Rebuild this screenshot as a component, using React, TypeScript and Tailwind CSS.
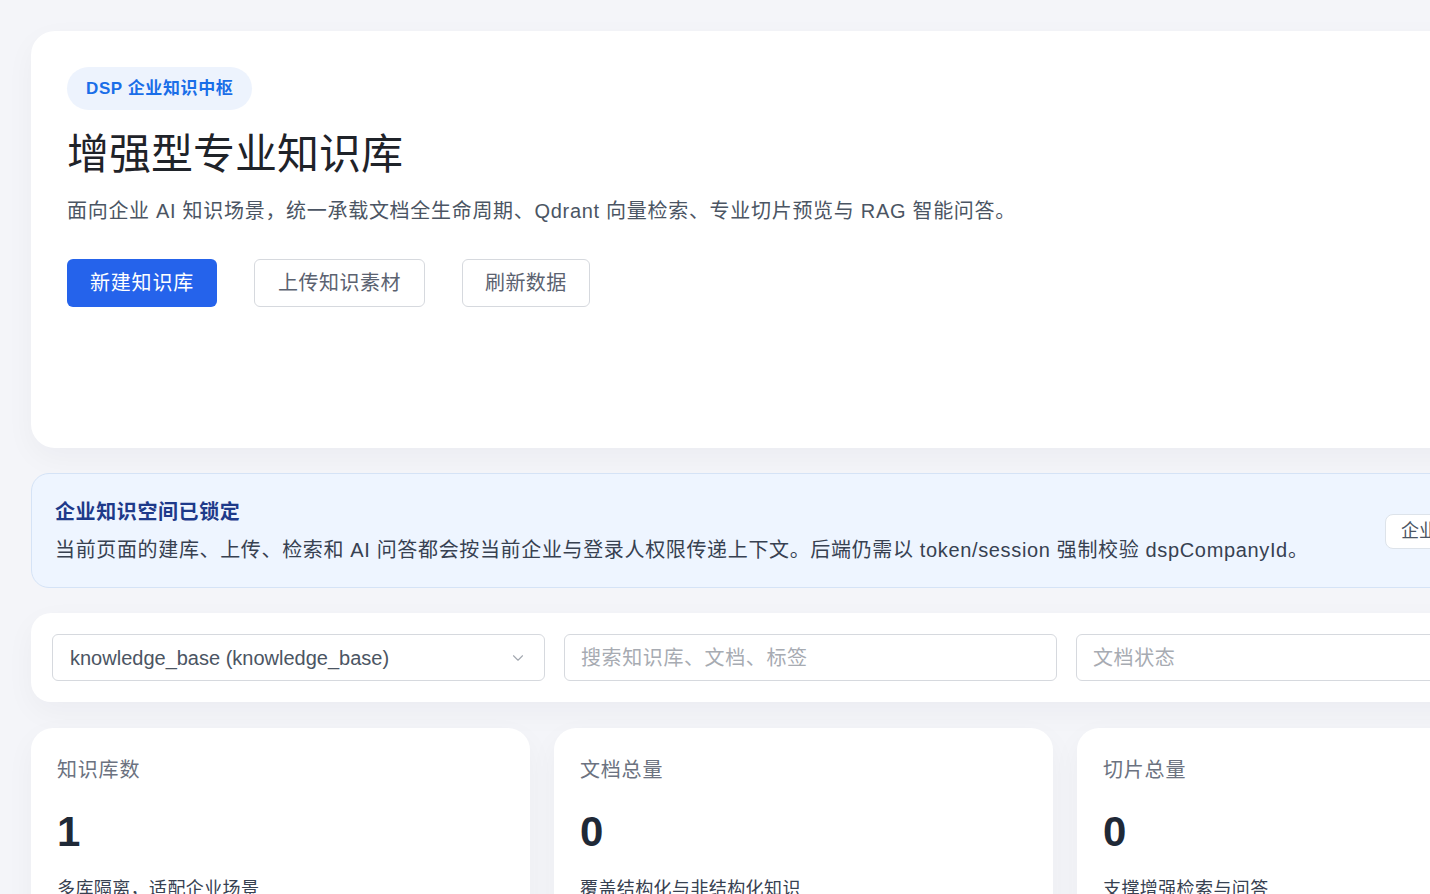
import { ChevronDown } from "lucide-react";

const FONT = { fontFamily: '"Liberation Sans", "Noto Sans CJK SC", Arial, sans-serif' };

const STATS = [
  { label: "知识库数", value: "1", hint: "多库隔离，适配企业场景" },
  { label: "文档总量", value: "0", hint: "覆盖结构化与非结构化知识" },
  { label: "切片总量", value: "0", hint: "支撑增强检索与问答" },
];

function HeroCard() {
  return (
    <section className="h-[417px] rounded-[24px] bg-white p-[36px] shadow-[0_10px_30px_rgba(15,23,42,0.04)]">
      <span className="inline-flex h-[43px] items-center rounded-full bg-[#edf3fd] px-[19px] text-[17px] font-bold tracking-[0.6px] text-[#1a6ee8]">
        DSP 企业知识中枢
      </span>
      <h1 className="mt-[19px] text-[42px] font-normal leading-[52px] text-[#1f2329]">增强型专业知识库</h1>
      <p className="mt-[16px] text-[20px] leading-[28px] tracking-[0.7px] text-[#4b5563]">
        面向企业 AI 知识场景，统一承载文档全生命周期、Qdrant 向量检索、专业切片预览与 RAG 智能问答。
      </p>
      <div className="mt-[34px] flex gap-[37px]">
        <button
          type="button"
          className="h-[48px] rounded-[6px] bg-[#2563eb] px-[23px] text-[20px] tracking-[0.8px] text-white"
        >
          新建知识库
        </button>
        <button
          type="button"
          className="h-[48px] rounded-[6px] border border-[#d6d9de] bg-white px-[23px] text-[20px] tracking-[0.5px] text-[#5b6270]"
        >
          上传知识素材
        </button>
        <button
          type="button"
          className="h-[48px] rounded-[6px] border border-[#d6d9de] bg-white px-[22px] text-[20px] tracking-[0.4px] text-[#5b6270]"
        >
          刷新数据
        </button>
      </div>
    </section>
  );
}

function ScopeNotice() {
  return (
    <section className="flex items-center justify-between rounded-[18px] border border-[#d5e3f6] bg-[#eef5ff] px-[23px] pb-[23px] pt-[24px]">
      <div>
        <p className="text-[20px] font-bold leading-[28px] tracking-[0.6px] text-[#1e3a8a]">企业知识空间已锁定</p>
        <p className="mt-[10px] text-[20px] leading-[28px] tracking-[0.65px] text-[#374151]">
          当前页面的建库、上传、检索和 AI 问答都会按当前企业与登录人权限传递上下文。后端仍需以 token/session 强制校验 dspCompanyId。
        </p>
      </div>
      <span className="flex h-[35px] w-[167px] items-center rounded-[8px] border border-[#dde3ea] bg-white px-[15px] text-[18px] text-[#4b5563]">
        企业空间已隔离
      </span>
    </section>
  );
}

function FilterBar() {
  return (
    <section className="rounded-[20px] bg-white p-[21px] shadow-[0_10px_30px_rgba(15,23,42,0.04)]">
      <div className="grid grid-cols-[493px_493px_1fr] gap-[19px]">
        <div className="flex h-[47px] items-center justify-between rounded-[6px] border border-[#d6d9de] px-[17px] text-[20px] text-[#4b5563]">
          <span>knowledge_base (knowledge_base)</span>
          <ChevronDown size={18} strokeWidth={1.5} className="text-[#a3a8b0]" />
        </div>
        <div className="flex h-[47px] items-center rounded-[6px] border border-[#d6d9de] px-[16px] text-[20px] tracking-[0.6px] text-[#a7abb2]">
          搜索知识库、文档、标签
        </div>
        <div className="flex h-[47px] items-center rounded-[6px] border border-[#d6d9de] px-[16px] text-[20px] tracking-[0.6px] text-[#a7abb2]">
          文档状态
        </div>
      </div>
    </section>
  );
}

function StatCards() {
  return (
    <div className="mt-[1px] grid grid-cols-3 gap-[24px]">
      {STATS.map((stat) => (
        <div
          key={stat.label}
          className="h-[220px] rounded-[22px] bg-white px-[26px] pt-[28px] shadow-[0_10px_30px_rgba(15,23,42,0.04)]"
        >
          <p className="text-[20px] leading-[28px] tracking-[0.8px] text-[#6b7280]">{stat.label}</p>
          <p className="mt-[24px] text-[42px] font-bold leading-[48px] text-[#1f2937]">{stat.value}</p>
          <p className="mt-[20px] text-[18px] leading-[26px] tracking-[0.4px] text-[#374151]">{stat.hint}</p>
        </div>
      ))}
    </div>
  );
}

export default function App() {
  return (
    <div className="h-[894px] w-full overflow-hidden bg-[#f4f5f9]" style={FONT}>
      <div className="flex w-[1607px] flex-col gap-[25px] px-[31px] pt-[31px]">
        <HeroCard />
        <ScopeNotice />
        <FilterBar />
        <StatCards />
      </div>
    </div>
  );
}
